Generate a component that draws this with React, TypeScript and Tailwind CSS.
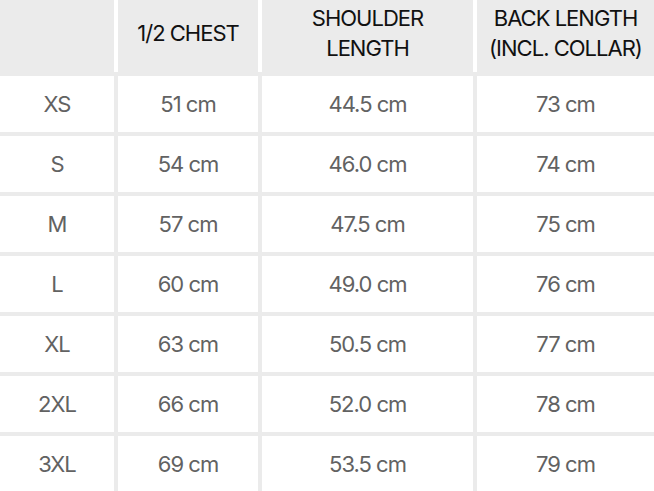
import React from 'react';

const rows = [
  ['XS', '51 cm', '44.5 cm', '73 cm'],
  ['S', '54 cm', '46.0 cm', '74 cm'],
  ['M', '57 cm', '47.5 cm', '75 cm'],
  ['L', '60 cm', '49.0 cm', '76 cm'],
  ['XL', '63 cm', '50.5 cm', '77 cm'],
  ['2XL', '66 cm', '52.0 cm', '78 cm'],
  ['3XL', '69 cm', '53.5 cm', '79 cm'],
];

const headers = ['', '1/2 CHEST', 'SHOULDER LENGTH', 'BACK LENGTH (INCL. COLLAR)'];

const App = () => {
  return (
    <div
      className="w-[654px] h-[491px] overflow-hidden bg-white"
      style={{ fontFamily: 'Inter, "Noto Sans", sans-serif' }}
    >
      <div className="bg-[#ebebeb] pb-[4px]">
        <div className="grid grid-cols-[114px_140px_211px_177px] gap-x-[4px] bg-white">
          {headers.map((h, i) => (
            <div
              key={i}
              className="h-[72px] bg-[#ebebeb] flex items-center justify-center text-center pb-[7px] text-[22px] leading-[30px] tracking-[-0.045em] text-[#111111]"
            >
              <span className={i === 2 ? 'max-w-[140px]' : i === 3 ? 'max-w-[176px]' : ''}>{h}</span>
            </div>
          ))}
        </div>
      </div>
      <div className="grid grid-cols-[114px_140px_211px_177px] gap-[4px] bg-[#ebebeb]">
        {rows.map((r) =>
          r.map((c, j) => (
            <div
              key={r[0] + j}
              className="h-[56px] bg-white flex items-center justify-center text-[22px] tracking-[-0.045em] text-[#626262]"
            >
              {c}
            </div>
          ))
        )}
      </div>
    </div>
  );
};

export default App;
